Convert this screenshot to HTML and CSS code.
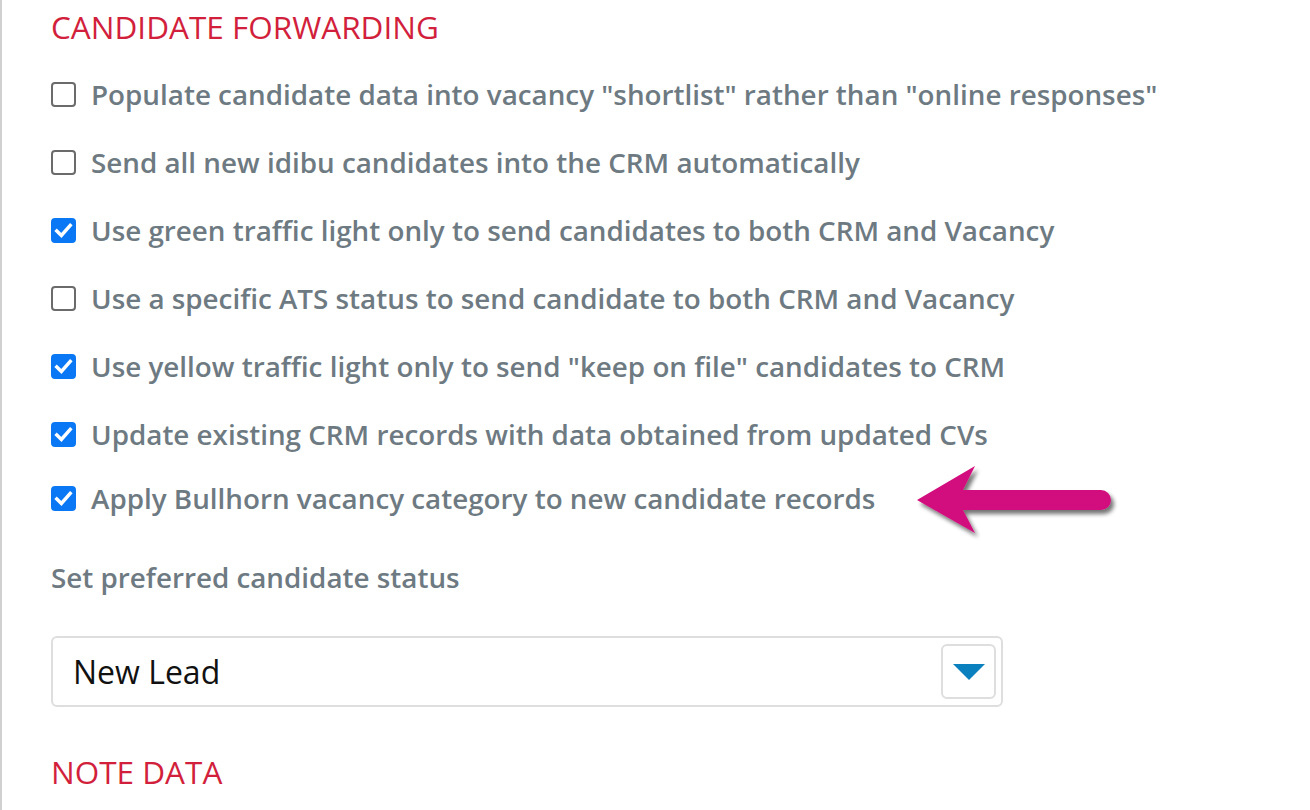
FILE: index.html
```html
<!DOCTYPE html>
<html>
<head>
<meta charset="utf-8">
<link rel="stylesheet" href="styles.css">
</head>
<body>
<div class="panel">
  <h2 class="section-title">CANDIDATE FORWARDING</h2>
  <div class="options">
    <label class="opt"><span class="box"></span><span class="txt">Populate candidate data into vacancy "shortlist" rather than "online responses"</span></label>
    <label class="opt"><span class="box"></span><span class="txt">Send all new idibu candidates into the CRM automatically</span></label>
    <label class="opt"><span class="box checked"><svg viewBox="0 0 24 24"><path d="M5 12.5 L9.8 17.2 L19 6.8" /></svg></span><span class="txt">Use green traffic light only to send candidates to both CRM and Vacancy</span></label>
    <label class="opt"><span class="box"></span><span class="txt">Use a specific ATS status to send candidate to both CRM and Vacancy</span></label>
    <label class="opt"><span class="box checked"><svg viewBox="0 0 24 24"><path d="M5 12.5 L9.8 17.2 L19 6.8" /></svg></span><span class="txt">Use yellow traffic light only to send "keep on file" candidates to CRM</span></label>
    <label class="opt"><span class="box checked"><svg viewBox="0 0 24 24"><path d="M5 12.5 L9.8 17.2 L19 6.8" /></svg></span><span class="txt">Update existing CRM records with data obtained from updated CVs</span></label>
    <label class="opt opt-last"><span class="box checked"><svg viewBox="0 0 24 24"><path d="M5 12.5 L9.8 17.2 L19 6.8" /></svg></span><span class="txt">Apply Bullhorn vacancy category to new candidate records</span>
      <svg class="pointer" viewBox="0 0 210 80" width="210" height="80">
        <defs>
          <filter id="sh" x="-20%" y="-30%" width="140%" height="170%">
            <feGaussianBlur in="SourceAlpha" stdDeviation="2.2"/>
            <feOffset dx="3" dy="4" result="b"/>
            <feComponentTransfer><feFuncA type="linear" slope="0.55"/></feComponentTransfer>
            <feMerge><feMergeNode/><feMergeNode in="SourceGraphic"/></feMerge>
          </filter>
        </defs>
        <g filter="url(#sh)">
          <path d="M4 36 L62 2 L50 26 L188 26 A10 10 0 0 1 188 46 L50 46 L62 69 Z" fill="#d20c7d"/>
        </g>
      </svg>
    </label>
  </div>
  <div class="field-label">Set preferred candidate status</div>
  <div class="select">
    <span class="select-value">New Lead</span>
    <span class="select-btn"><span class="tri"></span></span>
  </div>
  <h2 class="section-title note">NOTE DATA</h2>
</div>
</body>
</html>
```
FILE: styles.css
```css
html, body {
  margin: 0;
  padding: 0;
  background: #fff;
}
body {
  font-family: "Open Sans", "Liberation Sans", sans-serif;
  width: 1310px;
  height: 810px;
  overflow: hidden;
}
.panel {
  border-left: 2px solid #d0d0d0;
  height: 810px;
  box-sizing: border-box;
  padding-left: 49px;
  padding-top: 5px;
}
.section-title {
  margin: 0;
  font-weight: 400;
  font-size: 31.5px;
  line-height: 44px;
  color: #d21f3c;
}
.options {
  display: flex;
  flex-direction: column;
  margin-top: 11px;
}
.opt {
  position: relative;
  display: flex;
  align-items: center;
  height: 68px;
  gap: 15px;
}
.opt-last {
  height: 60px;
}
.box {
  width: 21px;
  height: 21px;
  border: 2px solid #6b6b6b;
  border-radius: 4px;
  flex: none;
  display: flex;
  align-items: center;
  justify-content: center;
}
.box.checked {
  background: #0a77f5;
  border-color: #0a77f5;
}
.box svg {
  width: 23px;
  height: 23px;
  flex: none;
  fill: none;
  stroke: #fff;
  stroke-width: 3.6;
  stroke-linecap: square;
}
.txt {
  font-size: 27.8px;
  font-weight: 600;
  color: #6e7a82;
  white-space: nowrap;
}
.pointer {
  position: absolute;
  left: 862px;
  top: -4px;
}
.field-label {
  font-size: 27.8px;
  font-weight: 600;
  color: #6e7a82;
  margin-top: 30px;
  line-height: 38px;
}
.select {
  margin-top: 40px;
  width: 952px;
  height: 71px;
  box-sizing: border-box;
  border: 2px solid #dedede;
  border-radius: 6px;
  display: flex;
  align-items: center;
  justify-content: space-between;
  padding: 0 5px 0 20px;
}
.select-value {
  font-size: 32px;
  color: #111;
}
.select-btn {
  width: 55px;
  height: 55px;
  box-sizing: border-box;
  border: 2px solid #dedede;
  border-radius: 6px;
  display: flex;
  align-items: center;
  justify-content: center;
}
.tri {
  width: 0;
  height: 0;
  border-left: 16px solid transparent;
  border-right: 16px solid transparent;
  border-top: 16px solid #0a80bf;
}
.note {
  margin-top: 43px;
}
```
